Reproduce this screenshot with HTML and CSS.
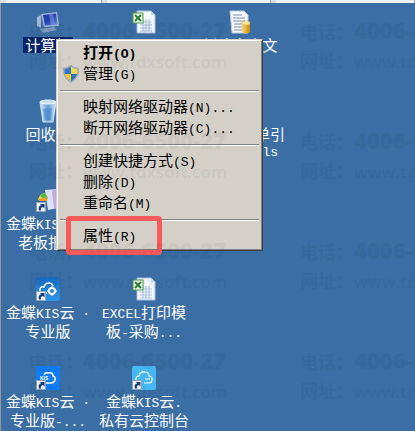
FILE: index.html
```
<!DOCTYPE html>
<html lang="zh-CN">

<head>
    <meta charset="utf-8">
    <title>桌面</title>
    <link rel="stylesheet" href="styles.css">
</head>

<body>
    <svg class="defs" aria-hidden="true">
        <defs>
            <linearGradient id="screen" x1="0" y1="0" x2="1" y2="1">
                <stop offset="0" stop-color="#1d2fa8" />
                <stop offset=".5" stop-color="#2438b8" />
                <stop offset="1" stop-color="#7aa0ea" />
            </linearGradient>
            <linearGradient id="glass" x1="0" y1="0" x2="1" y2="0">
                <stop offset="0" stop-color="#d9e9f5" />
                <stop offset=".5" stop-color="#5f9bd6" />
                <stop offset="1" stop-color="#dbe9f5" />
            </linearGradient>
            <linearGradient id="gold" x1="0" y1="0" x2="1" y2="0">
                <stop offset="0" stop-color="#f9dc68" />
                <stop offset="1" stop-color="#c98c10" />
            </linearGradient>
            <linearGradient id="blue" x1="0" y1="0" x2="0" y2="1">
                <stop offset="0" stop-color="#1a6cc4" />
                <stop offset="1" stop-color="#2f97ea" />
            </linearGradient>
            <symbol id="shortcut" viewBox="0 0 10 10">
                <rect x=".5" y=".5" width="9" height="9" fill="#eef3f8" stroke="#8ea6bd" />
                <path d="M3 8.500C2 5.500 3 4 5 3.500L4 2H8.500V6.500L7 5C5 5.500 4.500 6.500 5 8.500z" fill="#1c3f7c" />
            </symbol>
            <symbol id="sheet" viewBox="0 0 24 24">
                <path d="M5 1H19L23 5V23H5z" fill="#f5f8fd" stroke="#a9bedb" />
                <path d="M19 1V5H23z" fill="#c5d5ea" />
                <path d="M8 12H20M8 15H20M8 18H20M8 21H20M11 9V21M14 9V21M17 9V21" stroke="#a9bfe0" fill="none" />
                <rect x="1" y="3" width="10" height="10" fill="#f2f9ee" stroke="#4b9a48" />
                <path d="M3 5L9 11M9 5L3 11" stroke="#2b8033" stroke-width="2" />
            </symbol>
        </defs>
    </svg>

    <div class="window-edge"><span></span><span></span><span></span></div>

    <main class="desktop">
        <a class="icon selected" href="#">
            <svg viewBox="0 0 24 24">
                <path d="M1 7L5 5V18L1 16z" fill="#b9c8dc" />
                <path d="M5 4L21 2L23 16L8 17z" fill="#b9cbe2" />
                <path d="M7 5L20 3.500L21.500 14.500L9 15.500z" fill="url(#screen)" />
                <path d="M13 4.300L17 4L19 14.700L15 15z" fill="#91b0f0" opacity=".5" />
                <path d="M4 19L18 17L21 20L7 23z" fill="#8ea7c7" />
            </svg>
            <span class="label">计算机</span>
        </a>
        <a class="icon" href="#">
            <svg viewBox="0 0 24 24"><use href="#sheet" /></svg>
        </a>
        <a class="icon" href="#">
            <svg viewBox="0 0 24 24">
                <path d="M2 1H16L20 5V23H4z" fill="#f6f8fb" stroke="#bccadb" />
                <path d="M5 5H14M5 8H17M5 11H17M6 14H14M6 17H14M6 20H14" stroke="#7790b0" />
                <path d="M14 13V22Q18 25 22 22V13z" fill="url(#gold)" />
                <ellipse cx="18" cy="13" rx="4" ry="2" fill="#fbe9a0" stroke="#d6a531" stroke-width=".5" />
            </svg>
            <span class="label">新建文本文</span>
        </a>

        <a class="icon" href="#">
            <svg viewBox="0 0 24 24">
                <path d="M4 3L20 3L17 23H7z" fill="url(#glass)" stroke="#cfe0ef" />
                <path d="M7 10L16 9L15 21H9z" fill="#3f83c9" opacity=".6" />
                <ellipse cx="12" cy="3" rx="8" ry="2" fill="#c6dff2" stroke="#eef5fb" />
            </svg>
            <span class="label">回收站</span>
        </a>
        <span></span>
        <a class="icon" href="#">
            <span class="art"></span>
            <span class="label">采购订货单引</span>
            <span class="label">入模板<span class="latin">.xls</span></span>
        </a>

        <a class="icon" href="#">
            <svg viewBox="0 0 24 24">
                <path d="M9 2L22 1V20L12 22z" fill="#dbe2f5" />
                <path d="M16 3L22 1V20L18 21z" fill="#c1a9e0" />
                <path d="M2 12Q3 6 9 5L12 12z" fill="#f1d92c" />
                <path d="M4 8Q9 2 12 10L9 12z" fill="#56b947" />
                <path d="M3 11L11 9V13H3z" fill="#ef9c2e" />
                <use href="#shortcut" x="0" y="14" width="10" height="10" />
            </svg>
            <span class="label">金蝶<span class="latin">KIS</span>云<span class="latin"> ·</span></span>
            <span class="label">老板报表</span>
        </a>
        <span></span>
        <span></span>

        <a class="icon" href="#">
            <svg viewBox="0 0 24 24">
                <rect width="24" height="24" rx="3" fill="url(#blue)" />
                <path d="M11 16H7Q3 15 4 12Q5 9 8 10Q9 6 13 6Q16 6 17 9" fill="none" stroke="#fff" stroke-width="1.500" />
                <path d="M16 9V19M11 14H21M13 11L19 17M19 11L13 17" stroke="#fff" />
                <circle cx="16" cy="14" r="3" fill="#2784d8" stroke="#fff" stroke-width="2" />
                <use href="#shortcut" x="0" y="14" width="10" height="10" />
            </svg>
            <span class="label">金蝶<span class="latin">KIS</span>云<span class="latin"> ·</span></span>
            <span class="label">专业版</span>
        </a>
        <a class="icon" href="#">
            <svg viewBox="0 0 24 24"><use href="#sheet" /></svg>
            <span class="label"><span class="latin">EXCEL</span>打印模</span>
            <span class="label">板<span class="latin">-</span>采购<span class="latin">...</span></span>
        </a>
        <span></span>

        <a class="icon" href="#">
            <svg viewBox="0 0 24 24">
                <rect width="24" height="24" rx="1" fill="#0f7cf5" />
                <path d="M8 9Q9 6 12 7Q17 6 17 10Q20 11 19 14Q18 17 15 17H10" fill="none" stroke="#fff" stroke-width="1.500" />
                <text class="kis" x="4" y="14">KIS</text>
                <use href="#shortcut" x="0" y="14" width="10" height="10" />
            </svg>
            <span class="label">金蝶<span class="latin">KIS</span>云<span class="latin"> ·</span></span>
            <span class="label">专业版<span class="latin">-...</span></span>
        </a>
        <a class="icon" href="#">
            <svg viewBox="0 0 24 24">
                <rect width="24" height="24" rx="2" fill="#45b7f2" />
                <path d="M10 17H7Q3 16 4 13Q4 10 7 10Q8 5 13 6Q17 6 17 10Q21 11 20 14Q20 17 17 17H12M13 13H18" fill="none" stroke="#fff" stroke-width="1.200" />
                <use href="#shortcut" x="0" y="14" width="10" height="10" />
            </svg>
            <span class="label">金蝶<span class="latin">KIS</span>云<span class="latin">.</span></span>
            <span class="label">私有云控制台</span>
        </a>
    </main>

    <menu class="context-menu">
        <li><button class="default">打开<span class="latin">(O)</span></button></li>
        <li><button>
            <svg class="shield" viewBox="0 0 16 18">
                <path d="M8 0Q12 3 16 3Q17 13 8 18Q-1 13 0 3Q4 3 8 0z" fill="#9ba9b8" />
                <path d="M8 2V9H2Q1 6 2 4Q5 4 8 2z" fill="#2b74c9" />
                <path d="M8 2Q11 4 14 4Q15 6 14 9H8z" fill="#f7d94d" />
                <path d="M2 9H8V16Q3 13 2 9z" fill="#f4c72f" />
                <path d="M8 9H14Q13 13 8 16z" fill="#2d6fc0" />
            </svg>管理<span class="latin">(G)</span></button></li>
        <li class="line"></li>
        <li><button>映射网络驱动器<span class="latin">(N)...</span></button></li>
        <li><button>断开网络驱动器<span class="latin">(C)...</span></button></li>
        <li class="line"></li>
        <li><button>创建快捷方式<span class="latin">(S)</span></button></li>
        <li><button>删除<span class="latin">(D)</span></button></li>
        <li><button>重命名<span class="latin">(M)</span></button></li>
        <li class="line"></li>
        <li class="marked"><button>属性<span class="latin">(R)</span></button></li>
    </menu>

    <!-- contact details tiled over the whole screen -->
    <div class="watermark" aria-hidden="true">
        <div><p>电话：<b>4006-6500-27</b></p><p>网址：<i>www.tdxsoft.com</i></p></div>
        <div><p>电话：<b>4006-6500-27</b></p><p>网址：<i>www.tdxsoft.com</i></p></div>
        <div><p>电话：<b>4006-6500-27</b></p><p>网址：<i>www.tdxsoft.com</i></p></div>
        <div><p>电话：<b>4006-6500-27</b></p><p>网址：<i>www.tdxsoft.com</i></p></div>
        <div><p>电话：<b>4006-6500-27</b></p><p>网址：<i>www.tdxsoft.com</i></p></div>
        <div><p>电话：<b>4006-6500-27</b></p><p>网址：<i>www.tdxsoft.com</i></p></div>
        <div><p>电话：<b>4006-6500-27</b></p><p>网址：<i>www.tdxsoft.com</i></p></div>
        <div><p>电话：<b>4006-6500-27</b></p><p>网址：<i>www.tdxsoft.com</i></p></div>
    </div>
</body>

</html>
```
FILE: styles.css
```
*,
*::after {
    box-sizing: border-box;
}

body {
    margin: 0;
    min-height: 100vh;
    position: relative;
    overflow: hidden;
    background: #3a6ea5;
    font-family: "Noto Sans CJK SC", sans-serif;
    font-size: 15px;
    line-height: 16px;
}

.defs {
    position: absolute;
    width: 0;
    height: 0;
}

.latin {
    font-family: "Liberation Mono", monospace;
    font-size: 13px;
    white-space: pre;
}

/* bottom of the window above the desktop */
.window-edge {
    display: grid;
    grid-template-columns: 96px 164px 1fr;
    gap: 5px;
    height: 3px;
    padding-left: 6px;
    background: #d9dde1;
}

.window-edge span {
    background: #eef1f4;
    border-right: 1px solid #a5abb2;
}

.desktop {
    display: grid;
    grid-template-columns: repeat(3, 96px);
    grid-auto-rows: 59px;
    row-gap: 30px;
    align-content: start;
    min-height: calc(100vh - 3px);
    padding-top: 7px;
    box-shadow: inset 1px 0 #9a9a9a;
}

.icon {
    display: flex;
    flex-direction: column;
    align-items: center;
    color: #fff;
    text-decoration: none;
}

.icon svg,
.art {
    width: 24px;
    height: 24px;
    margin-bottom: 3px;
    flex: none;
}

.label {
    white-space: nowrap;
}

.selected .label {
    background: #0a246a;
    padding: 0 2px;
}

.selected svg {
    opacity: .8;
}

.kis {
    font: bold 5px "Liberation Sans", sans-serif;
    fill: #fff;
}

.context-menu {
    position: absolute;
    left: 56px;
    top: 39px;
    width: 207px;
    margin: 0;
    padding: 3px;
    list-style: none;
    background: #d4d0c8;
    border: 1px solid;
    border-color: #d4d0c8 #404040 #404040 #d4d0c8;
    box-shadow: inset 1px 1px #fff, inset -1px -1px #808080;
}

.context-menu button {
    display: block;
    position: relative;
    width: 100%;
    height: 21px;
    padding: 0 0 0 23px;
    border: 0;
    background: none;
    color: #000;
    font: inherit;
    text-align: left;
    white-space: nowrap;
}

.context-menu .default {
    font-weight: bold;
}

.context-menu .line {
    height: 2px;
    margin: 5px 0;
    border-top: 1px solid #808080;
    border-bottom: 1px solid #fff;
}

.shield {
    position: absolute;
    left: 3px;
    top: 1px;
    width: 16px;
    height: 18px;
}

.marked {
    position: relative;
}

.marked::after {
    content: "";
    position: absolute;
    left: 6px;
    top: -10px;
    width: 96px;
    height: 39px;
    border: 5px solid #f85a5a;
    border-radius: 4px;
    pointer-events: none;
}

.watermark {
    position: absolute;
    inset: 0;
    overflow: hidden;
    display: grid;
    grid-template-columns: repeat(2, 271px);
    grid-auto-rows: 110px;
    padding: 16px 0 0 29px;
    color: #000;
    opacity: .04;
    pointer-events: none;
    font-size: 18px;
    line-height: 29px;
    font-weight: bold;
}

.watermark p {
    margin: 0;
    white-space: nowrap;
}

.watermark b,
.watermark i {
    font-family: "Open Sans", sans-serif;
    font-style: normal;
}

.watermark b {
    font-size: 22px;
}

.watermark i {
    font-size: 17px;
    font-weight: 600;
}
```
